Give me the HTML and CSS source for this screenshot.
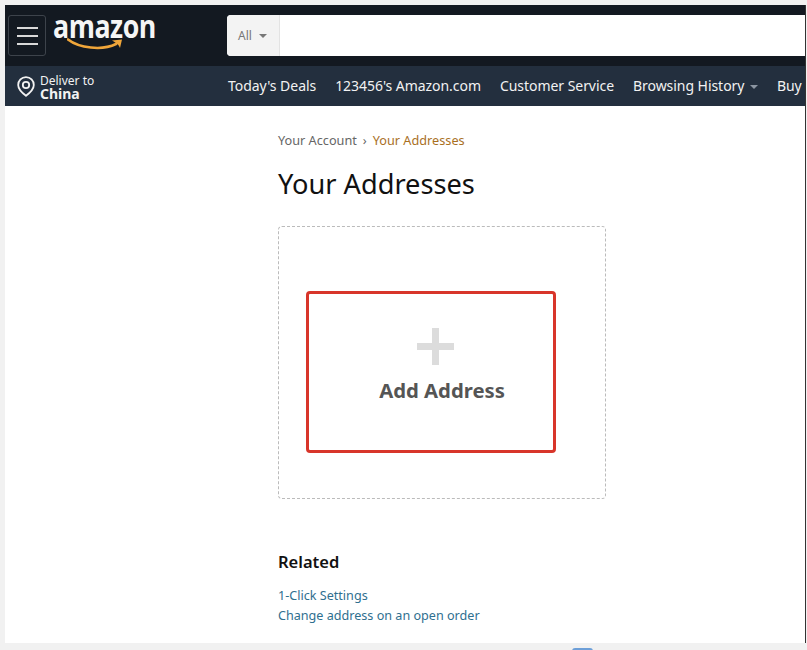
FILE: index.html
```html
<!DOCTYPE html>
<html lang="en">
<head>
  <meta charset="UTF-8">
  <meta name="viewport" content="width=device-width, initial-scale=1.0">
  <title>Your Addresses</title>
  <link rel="stylesheet" href="styles.css">
</head>
<body>

<div class="frame">
  <div class="top-bar">
    <div class="menu-btn">
      <span class="menu-line"></span>
      <span class="menu-line"></span>
      <span class="menu-line"></span>
    </div>
    <div class="logo">
      <span class="logo-text">amazon</span>
      <svg class="logo-smile" width="58" height="14" viewBox="0 0 58 14">
        <path d="M1 1.5C12 10 35 13 49 6" fill="none" stroke="#f0a63a" stroke-width="2.6" stroke-linecap="round"/>
        <path d="M45 2.5L55 1.5L53 10C52 7 50 5.5 45 2.5Z" fill="#f0a63a"/>
      </svg>
    </div>
    <div class="search">
      <div class="search-cat">All <span class="caret"></span></div>
    </div>
  </div>

  <div class="nav-bar">
    <div class="deliver">
      <svg width="18" height="21" viewBox="0 0 18 21">
        <path d="M9 1.2C4.5 1.2 1.2 4.6 1.2 9C1.2 13 5 16.8 9 19.8C13 16.8 16.8 13 16.8 9C16.8 4.6 13.5 1.2 9 1.2Z" fill="none" stroke="#f2f2f2" stroke-width="1.8"/>
        <circle cx="9" cy="9" r="3.2" fill="none" stroke="#f2f2f2" stroke-width="1.8"/>
      </svg>
      <div class="deliver-text">
        <span class="deliver-small">Deliver to</span>
        <span class="deliver-big">China</span>
      </div>
    </div>
    <div class="nav-links">
      <span>Today's Deals</span>
      <span>123456's Amazon.com</span>
      <span>Customer Service</span>
      <span>Browsing History <span class="caret caret-nav"></span></span>
      <span>Buy</span>
    </div>
  </div>

  <div class="content">
    <div class="breadcrumb">
      <span>Your Account</span>
      <span class="crumb-sep">›</span>
      <span class="crumb-current">Your Addresses</span>
    </div>
    <h1 class="page-title">Your Addresses</h1>

    <div class="add-card">
      <svg class="plus" width="37" height="37" viewBox="0 0 37 37">
        <rect x="0" y="15" width="37" height="7" fill="#dcdcdc"/>
        <rect x="15" y="0" width="7" height="37" fill="#dcdcdc"/>
      </svg>
      <div class="add-label">Add Address</div>
      <div class="highlight"></div>
    </div>

    <h2 class="related-title">Related</h2>
    <a class="related-link" href="#">1-Click Settings</a>
    <a class="related-link" href="#">Change address on an open order</a>
  </div>
</div>

<div class="bottom-tab"></div>

</body>
</html>
```

FILE: styles.css
```css
html, body {
  height: 100%;
}

body {
  margin: 0;
  height: 650px;
  overflow: hidden;
  box-sizing: border-box;
  padding: 5px 0 7px 5px;
  background-color: #f1f1f1;
  font-family: "Noto Sans", "Open Sans", sans-serif;
  position: relative;
}

.frame {
  height: 100%;
  width: 801px;
  display: flex;
  flex-direction: column;
  background-color: #fff;
  border-right: 1px solid #333;
  box-sizing: border-box;
}

/* top dark bar */
.top-bar {
  height: 61px;
  flex-shrink: 0;
  display: flex;
  align-items: flex-start;
  padding: 10px 0 0 3px;
  box-sizing: border-box;
  background-color: #131921;
}

.menu-btn {
  width: 38px;
  height: 41px;
  box-sizing: border-box;
  border: 1px solid #3d434b;
  border-radius: 3px;
  display: flex;
  flex-direction: column;
  justify-content: center;
  align-items: center;
  gap: 6px;
}

.menu-line {
  display: block;
  width: 21px;
  height: 2px;
  background-color: #d8d8d8;
}

.logo {
  width: 181px;
  padding-left: 7px;
  box-sizing: border-box;
  position: relative;
}

.logo-text {
  display: block;
  margin-top: -4px;
  font-family: "Open Sans", sans-serif;
  font-size: 33px;
  font-weight: 700;
  line-height: 30px;
  letter-spacing: -0.6px;
  color: #f5f5f5;
  transform: scaleX(0.81);
  transform-origin: left center;
}

.logo-smile {
  position: absolute;
  left: 21px;
  top: 23px;
}

.search {
  flex: 1;
  height: 41px;
  background-color: #fff;
  border-radius: 4px 0 0 4px;
  overflow: hidden;
}

.search-cat {
  width: 53px;
  height: 100%;
  box-sizing: border-box;
  background-color: #f3f3f3;
  border-right: 1px solid #e3e3e3;
  padding-left: 11px;
  display: flex;
  align-items: center;
  gap: 7px;
  font-size: 12px;
  color: #777;
}

.caret {
  display: inline-block;
  width: 0;
  height: 0;
  border-left: 4px solid transparent;
  border-right: 4px solid transparent;
  border-top: 4px solid #777;
}

.caret-nav {
  border-top-color: #8b95a1;
  margin-left: 2px;
  vertical-align: middle;
}

/* second bar */
.nav-bar {
  height: 40px;
  flex-shrink: 0;
  display: flex;
  align-items: center;
  padding-left: 12px;
  box-sizing: border-box;
  background-color: #232f3e;
  color: #f2f2f2;
  white-space: nowrap;
}

.deliver {
  width: 211px;
  flex-shrink: 0;
  display: flex;
  align-items: center;
  gap: 5px;
}

.deliver-text {
  display: flex;
  flex-direction: column;
  padding-top: 1px;
}

.deliver-small {
  font-size: 12px;
  line-height: 13px;
}

.deliver-big {
  font-size: 14px;
  font-weight: 700;
  line-height: 13px;
}

.nav-links {
  display: flex;
  gap: 19px;
  font-size: 14px;
  letter-spacing: -0.05px;
  margin-top: -2px;
}

/* main content */
.content {
  flex: 1;
  padding: 26px 0 0 273px;
}

.breadcrumb {
  display: flex;
  gap: 6px;
  font-size: 12.7px;
  line-height: 17px;
  color: #666;
}

.crumb-current {
  color: #a9701f;
}

.page-title {
  margin: 16px 0 0;
  font-size: 27.2px;
  font-weight: 400;
  line-height: 38px;
  color: #111;
}

.add-card {
  position: relative;
  width: 328px;
  height: 273px;
  margin-top: 23px;
  box-sizing: border-box;
  border: 1px dashed #bbb;
  border-radius: 4px;
  display: flex;
  flex-direction: column;
  align-items: center;
  padding-top: 101px;
}

.plus {
  margin-right: 13px;
}

.add-label {
  margin-top: 11px;
  font-size: 20.3px;
  font-weight: 700;
  line-height: 28px;
  color: #555;
}

/* red annotation over the card */
.highlight {
  position: absolute;
  left: 27px;
  top: 64px;
  width: 250px;
  height: 162px;
  box-sizing: border-box;
  border: 3px solid #d8352a;
  border-radius: 4px;
}

.related-title {
  margin: 51px 0 0;
  font-size: 16.5px;
  font-weight: 600;
  line-height: 24px;
  color: #111;
}

.related-link {
  display: block;
  font-size: 12.6px;
  line-height: 20px;
  color: #2f6f8f;
  text-decoration: none;
}

.related-title + .related-link {
  margin-top: 12px;
}

.bottom-tab {
  position: absolute;
  left: 572px;
  top: 648px;
  width: 21px;
  height: 4px;
  border-radius: 3px 3px 0 0;
  background-color: #6d9fd8;
}
```
